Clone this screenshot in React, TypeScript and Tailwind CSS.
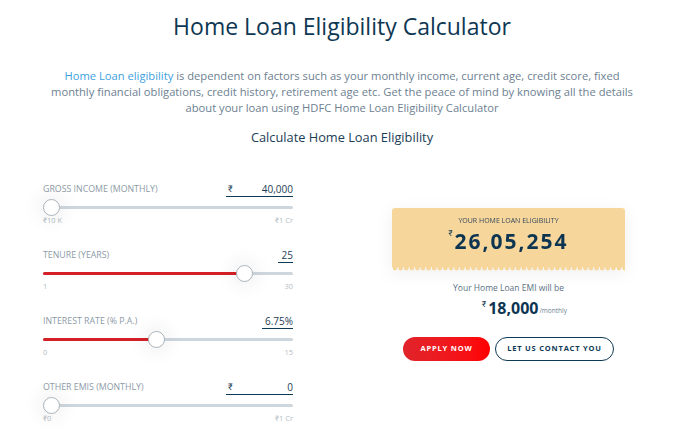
import React from "react";

const FONT = "font-['Open_Sans',Roboto,sans-serif]";

type SliderProps = {
  label: string;
  value: string;
  rupee?: boolean;
  boxW: number;
  pct: number;
  min: string;
  max: string;
  filled?: boolean;
};

function Slider({ label, value, rupee, boxW, pct, min, max, filled }: SliderProps) {
  const trackW = 250;
  const thumb = 17;
  const center = thumb / 2 + pct * (trackW - thumb);
  return (
    <div className="h-[66px]">
      <div className="flex h-[15px] items-center justify-between">
        <span className="text-[8.8px] uppercase text-[#8d9aa6]">{label}</span>
        <div
          className="flex h-[15px] items-center justify-between border-b border-[#0f3a56] text-[10px] text-[#1d3d55]"
          style={{ width: boxW }}
        >
          <span className="pl-[2px] text-[9px]">{rupee ? "₹" : ""}</span>
          <span>{value}</span>
        </div>
      </div>
      <div className="relative mt-[2px] h-[17px]">
        <div className="absolute left-0 right-0 top-[7px] h-[3px] rounded-full bg-[#cfd7de]" />
        {filled && (
          <div
            className="absolute left-0 top-[7px] h-[3px] rounded-l-full bg-[#d42027]"
            style={{ width: center }}
          />
        )}
        <div
          className="absolute top-0 h-[17px] w-[17px] rounded-full border border-[#a9b3bb] bg-white shadow-[0_0_18px_6px_rgba(0,0,0,0.05)]"
          style={{ left: center - thumb / 2 }}
        />
      </div>
      <div className="-mt-[1px] flex justify-between text-[7.5px] leading-[10px] text-[#b3bcc4]">
        <span>{min}</span>
        <span>{max}</span>
      </div>
    </div>
  );
}

function Scallops() {
  const w = 233;
  const circles = [];
  for (let x = 3; x < w; x += 5.6) {
    circles.push(<circle key={x} cx={x} cy={1} r={2.4} fill="#f7d69c" />);
  }
  return (
    <svg width={w} height={4} className="block">
      {circles}
    </svg>
  );
}

export default function App() {
  return (
    <div className={`min-h-[447px] w-[684px] bg-white ${FONT}`}>
      <h1 className="pt-[9px] text-center text-[23px] font-medium leading-[34px] text-[#0e3753]">
        Home Loan Eligibility Calculator
      </h1>
      <p className="mx-auto mt-[25px] w-[680px] text-center text-[11.2px] leading-[16px] text-[#6d8191]">
        <span className="text-[#3d9fdf]">Home Loan eligibility</span> is dependent on factors such as your monthly
        income, current age, credit score, fixed
        <br />
        monthly financial obligations, credit history, retirement age etc. Get the peace of mind by knowing all the details
        <br />
        about your loan using HDFC Home Loan Eligibility Calculator
      </p>
      <h2 className="mt-[12px] text-center text-[12.8px] font-medium leading-[18px] text-[#1b3d55]">
        Calculate Home Loan Eligibility
      </h2>
      <div className="mt-[36px] flex">
        <div className="ml-[43px] w-[250px]">
          <Slider label="Gross Income (Monthly)" value="40,000" rupee boxW={67} pct={0} min="₹10 K" max="₹1 Cr" />
          <Slider label="Tenure (Years)" value="25" boxW={15} pct={24 / 29} min="1" max="30" filled />
          <Slider label="Interest Rate (% P.A.)" value="6.75%" boxW={31} pct={0.45} min="0" max="15" filled />
          <Slider label="Other EMIs (Monthly)" value="0" rupee boxW={67} pct={0} min="₹0" max="₹1 Cr" />
        </div>
        <div className="ml-[99px] mt-[26px] w-[233px] text-center">
          <div className="drop-shadow-[0_4px_8px_rgba(0,0,0,0.06)]">
            <div className="h-[59px] rounded-t-[3px] bg-[#f7d69c] pt-[8px]">
              <div className="text-[7px] leading-[10px] text-[#33475a]">YOUR HOME LOAN ELIGIBILITY</div>
              <div className="mt-[1px] flex items-start justify-center text-[#0d3551]">
                <span className="mr-[2px] mt-[1px] text-[8px] leading-[10px]">₹</span>
                <span className="text-[21px] font-bold leading-[28px] tracking-[2px]">26,05,254</span>
              </div>
            </div>
            <Scallops />
          </div>
          <div className="mt-[11px] text-[8.5px] leading-[12px] text-[#5b7283]">Your Home Loan EMI will be</div>
          <div className="mt-[3px] flex items-start justify-center pl-[32px] text-[#0d3551]">
            <span className="mr-[2px] mt-[2px] text-[8px] leading-[10px]">₹</span>
            <span className="text-[16px] font-bold leading-[22px]">18,000</span>
            <span className="mt-[10px] ml-[1px] text-[6.5px] leading-[8px] text-[#6d8191]">/monthly</span>
          </div>
          <div className="mt-[18px] flex justify-center gap-[5px]">
            <button className="h-[24px] w-[87px] rounded-full bg-gradient-to-r from-[#e0232a] to-[#ff0000] text-[7.5px] font-bold tracking-[0.8px] text-white">
              APPLY NOW
            </button>
            <button className="h-[24px] w-[119px] rounded-full border-[1.5px] border-[#0f3a56] bg-white text-[7.5px] font-bold tracking-[0.8px] text-[#0f3a56]">
              LET US CONTACT YOU
            </button>
          </div>
        </div>
      </div>
    </div>
  );
}
